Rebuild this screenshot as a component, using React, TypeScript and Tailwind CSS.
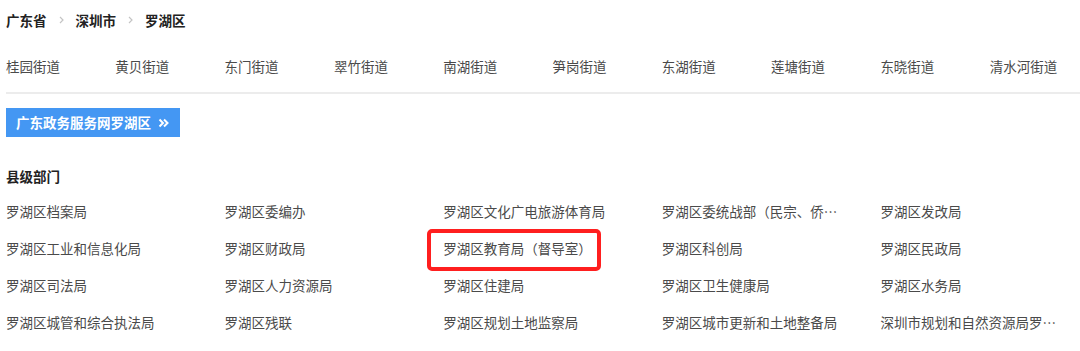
import React from 'react';

const streets = [
  '桂园街道',
  '黄贝街道',
  '东门街道',
  '翠竹街道',
  '南湖街道',
  '笋岗街道',
  '东湖街道',
  '莲塘街道',
  '东晓街道',
  '清水河街道',
];

const departments = [
  '罗湖区档案局',
  '罗湖区委编办',
  '罗湖区文化广电旅游体育局',
  '罗湖区委统战部（民宗、侨务局）',
  '罗湖区发改局',
  '罗湖区工业和信息化局',
  '罗湖区财政局',
  '罗湖区教育局（督导室）',
  '罗湖区科创局',
  '罗湖区民政局',
  '罗湖区司法局',
  '罗湖区人力资源局',
  '罗湖区住建局',
  '罗湖区卫生健康局',
  '罗湖区水务局',
  '罗湖区城管和综合执法局',
  '罗湖区残联',
  '罗湖区规划土地监察局',
  '罗湖区城市更新和土地整备局',
  '深圳市规划和自然资源局罗湖管理局',
];

const Chevron: React.FC = () => (
  <svg className="mx-[12px] h-[8px] w-[5px]" viewBox="0 0 5 8" fill="none">
    <path d="M1 1l3 3-3 3" stroke="#c4c4c4" strokeWidth="1.2" />
  </svg>
);

const App: React.FC = () => {
  return (
    <div
      className="h-[351px] w-[1080px] overflow-hidden bg-white pl-[6px]"
      style={{ fontFamily: '"Noto Sans CJK SC", "Noto Sans", sans-serif' }}
    >
      {/* Breadcrumb */}
      <div className="flex h-[40px] items-center text-[13.5px] font-bold text-[#222]">
        <span>广东省</span>
        <Chevron />
        <span>深圳市</span>
        <Chevron />
        <span>罗湖区</span>
      </div>

      {/* Streets */}
      <div className="flex h-[54px] w-[1100px] items-center border-b-2 border-[#ececec] text-[13.5px] text-[#4a4a4a]">
        {streets.map((s) => (
          <div key={s} className="w-[109.3px] shrink-0 whitespace-nowrap">
            {s}
          </div>
        ))}
      </div>

      {/* Link button */}
      <div className="mt-[14px] flex h-[29px] w-[174px] items-center bg-[#4497f3] pl-[10px] text-[13.5px] font-bold text-white">
        <span>广东政务服务网罗湖区</span>
        <svg className="ml-[7px] h-[10px] w-[11px]" viewBox="0 0 11 10" fill="none">
          <path d="M1.5 1.5l3.5 3.5-3.5 3.5M6 1.5l3.5 3.5-3.5 3.5" stroke="white" strokeWidth="2" />
        </svg>
      </div>

      {/* Section title */}
      <div className="mt-[29px] flex h-[20px] items-center text-[13.5px] font-bold text-[#222]">县级部门</div>

      {/* Departments */}
      <div className="mt-[7px] grid w-[1093px] grid-cols-5 text-[13.5px] text-[#4a4a4a]">
        {departments.map((d) => (
          <div key={d} className="relative flex h-[37px] items-center">
            <span className="w-[180px] truncate">{d}</span>
            {d === '罗湖区教育局（督导室）' && (
              <div className="absolute left-[-16px] top-[-1px] h-[42px] w-[174px] rounded-[5px] border-[4px] border-[#ff1f1f]" />
            )}
          </div>
        ))}
      </div>
    </div>
  );
};

export default App;
